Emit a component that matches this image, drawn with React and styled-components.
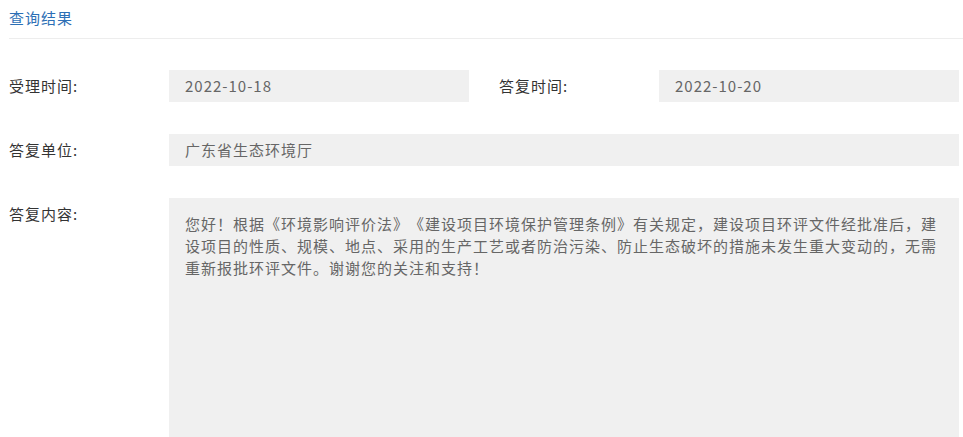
import React from "react";
import styled, { createGlobalStyle } from "styled-components";

const GlobalStyle = createGlobalStyle`
  body {
    margin: 0;
    background: #fff;
    font-family: "Noto Sans CJK SC", "Noto Sans", sans-serif;
    text-spacing-trim: space-all;
  }
`;

const Page = styled.div`
  padding: 0 4px 0 9px;
`;

const Header = styled.div`
  height: 38px;
  line-height: 36px;
  border-bottom: 1px solid #ededed;
  margin-right: -4px;
  color: #2d6fb5;
  font-size: 15px;
  letter-spacing: 1px;
`;

const Form = styled.div`
  display: flex;
  flex-direction: column;
  gap: 32px;
  padding-top: 31px;
`;

const Row = styled.div`
  display: flex;
  gap: 30px;
`;

const Field = styled.div`
  display: flex;
  flex: ${(p) => (p.$wide ? "1" : "0 0 460px")};
`;

const Label = styled.div`
  flex: 0 0 160px;
  line-height: 32px;
  font-size: 15px;
  letter-spacing: 1px;
  color: #333;
`;

const Value = styled.div`
  flex: 1;
  background: #f0f0f0;
  color: #666;
  font-size: 15px;
  letter-spacing: 1px;
  line-height: ${(p) => (p.$multi ? "22px" : "32px")};
  padding: ${(p) => (p.$multi ? "15px 16px" : "0 16px")};
  min-height: ${(p) => (p.$multi ? "245px" : "32px")};
  box-sizing: border-box;
`;

export default function App() {
  return (
    <Page>
      <GlobalStyle />
      <Header>查询结果</Header>
      <Form>
        <Row>
          <Field>
            <Label>受理时间:</Label>
            <Value>2022-10-18</Value>
          </Field>
          <Field>
            <Label>答复时间:</Label>
            <Value>2022-10-20</Value>
          </Field>
        </Row>
        <Row>
          <Field $wide>
            <Label>答复单位:</Label>
            <Value>广东省生态环境厅</Value>
          </Field>
        </Row>
        <Row>
          <Field $wide>
            <Label>答复内容:</Label>
            <Value $multi>
              您好！根据《环境影响评价法》《建设项目环境保护管理条例》有关规定，建设项目环评文件经批准后，建设项目的性质、规模、地点、采用的生产工艺或者防治污染、防止生态破坏的措施未发生重大变动的，无需重新报批环评文件。谢谢您的关注和支持！
            </Value>
          </Field>
        </Row>
      </Form>
    </Page>
  );
}
